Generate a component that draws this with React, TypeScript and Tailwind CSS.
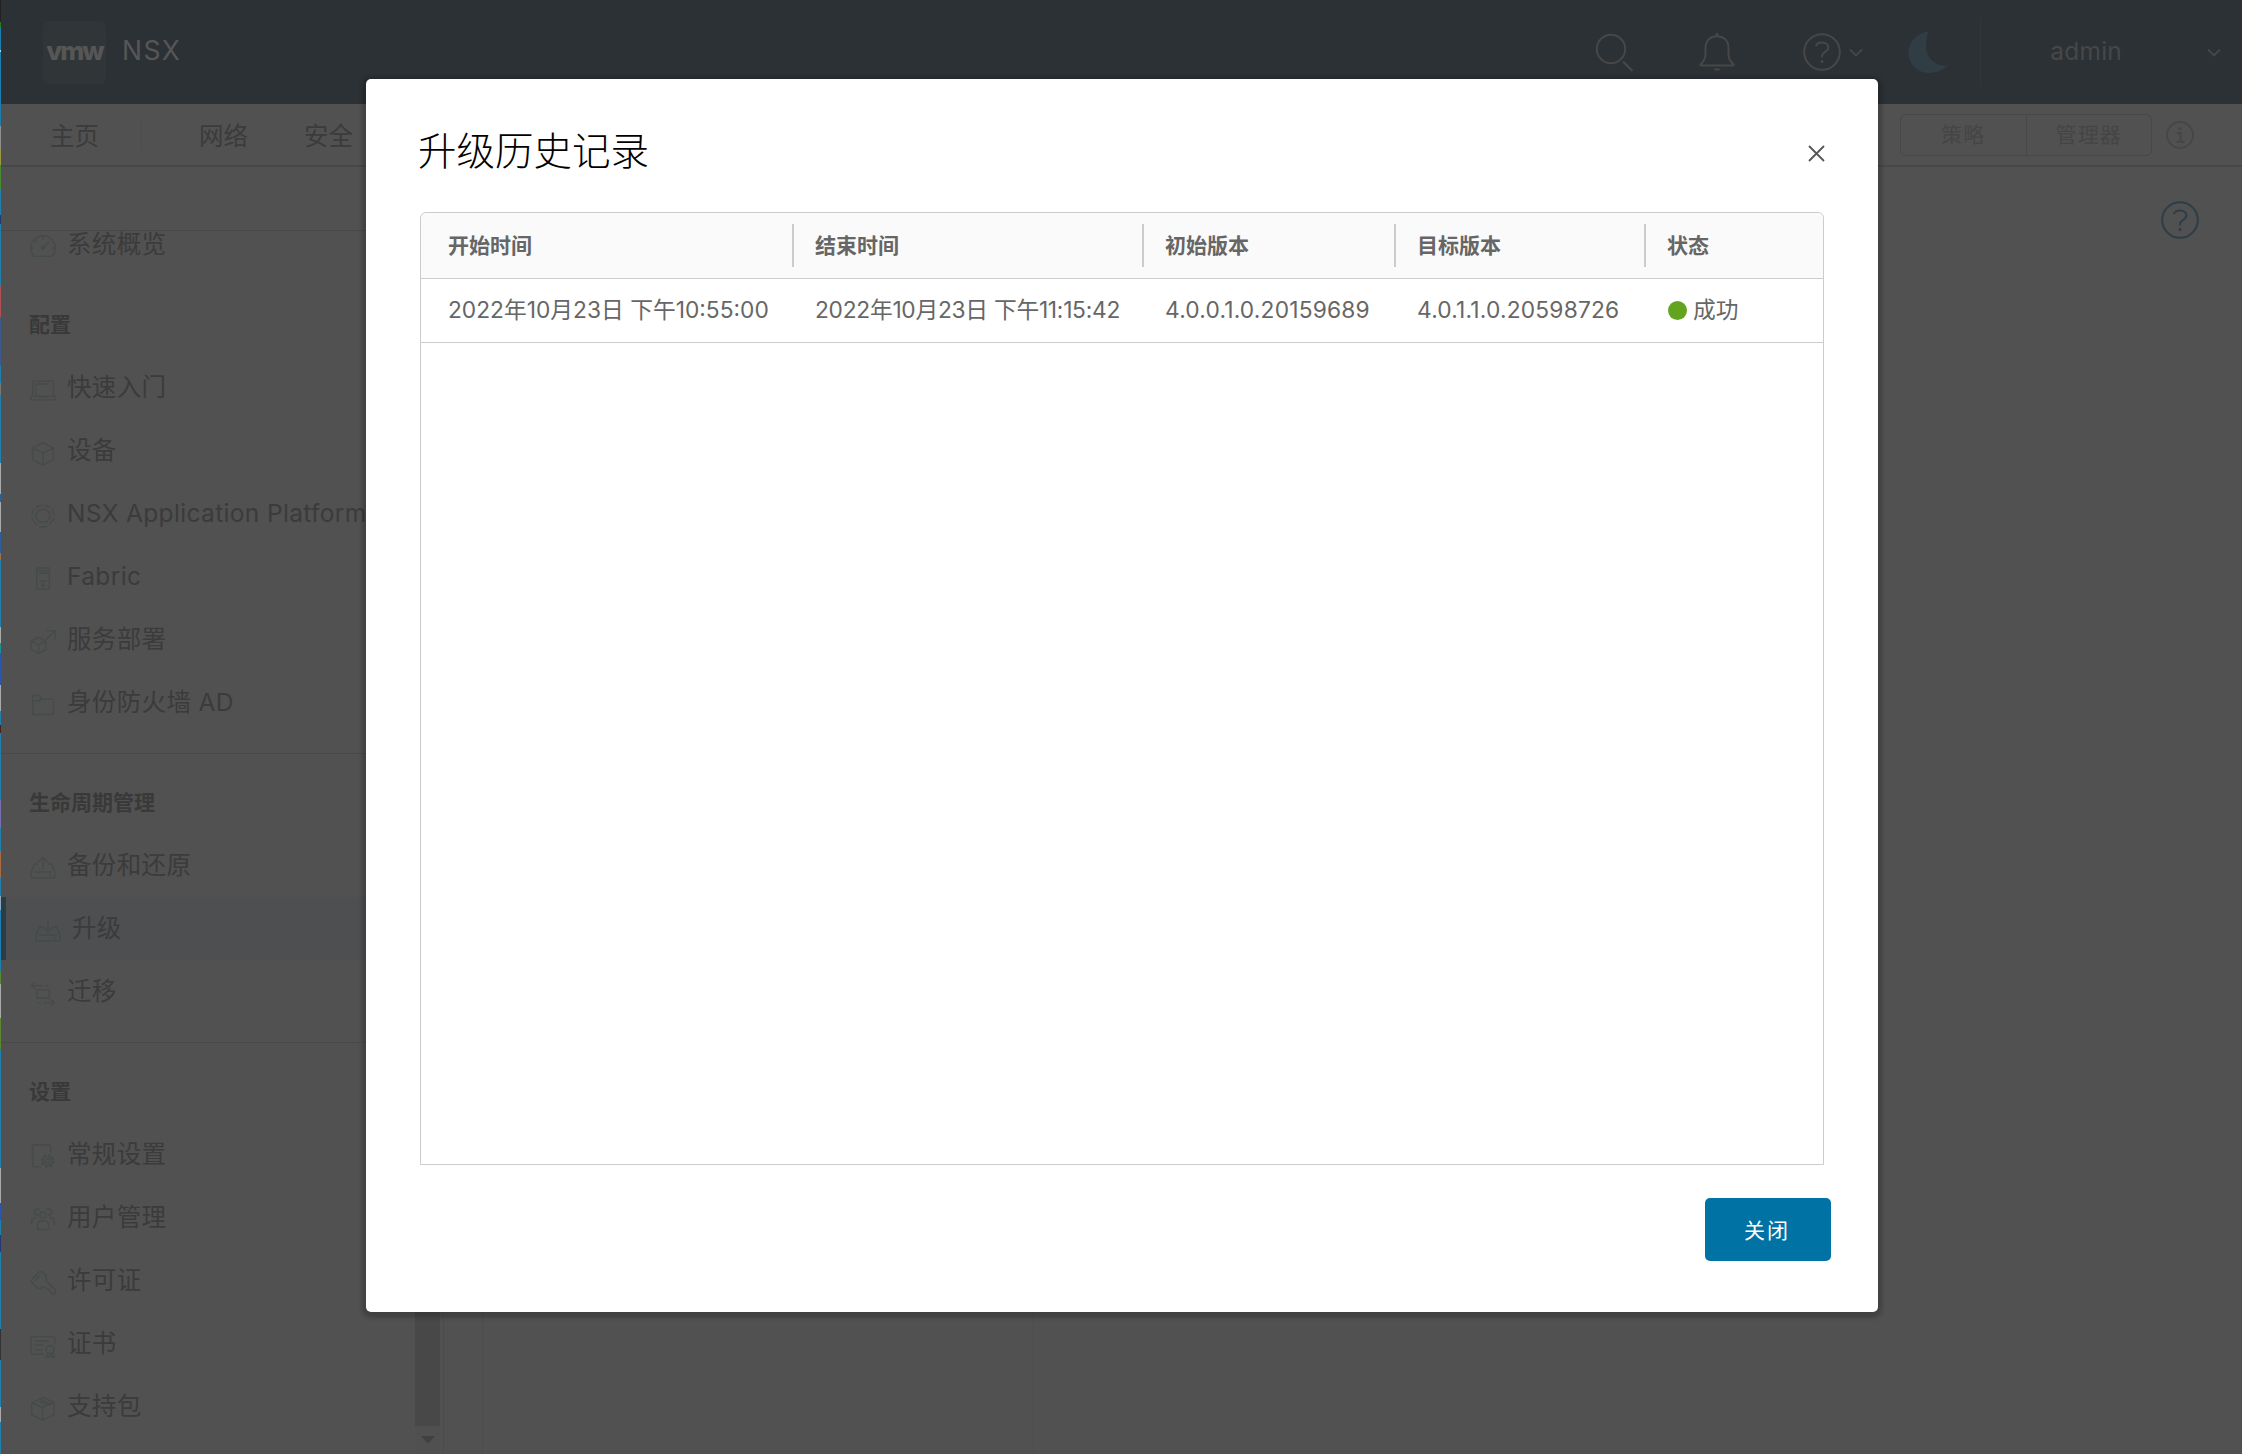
import type { ReactNode } from 'react';
import clsx from 'clsx';

interface NavItem {
  label: string;
  icon: ReactNode;
  active?: boolean;
}

interface HistoryRow {
  start: string;
  end: string;
  from: string;
  to: string;
  status: string;
}

const HISTORY: HistoryRow[] = [
  {
    start: '2022年10月23日 下午10:55:00',
    end: '2022年10月23日 下午11:15:42',
    from: '4.0.0.1.0.20159689',
    to: '4.0.1.1.0.20598726',
    status: '成功',
  },
];

// [height, colour] of the sliver of desktop left of the window
const DESKTOP: [number, string][] = [
  [22, '#222'], [5, '#2a7a1a'], [23, '#1a7fb0'], [2, '#ccc'], [74, '#1a7fb0'], [24, '#8f8f8f'],
  [15, '#9a9a40'], [25, '#4a8a30'], [25, '#1f80ad'], [9, '#223a70'], [61, '#1f80ad'], [32, '#b05050'],
  [49, '#3a5a90'], [17, '#1f80ad'], [12, '#777'], [68, '#1f80ad'], [31, '#aaa'], [8, '#2a5fa0'],
  [30, '#aaa'], [21, '#2a5fa0'], [7, '#a07040'], [67, '#1f80ad'], [16, '#aaa'], [10, '#1f9090'],
  [32, '#2a55b0'], [26, '#aaa'], [14, '#1f80ad'], [8, '#4a2020'], [67, '#1f80ad'], [28, '#7a6fb0'],
  [23, '#1f80ad'], [27, '#a86a45'], [18, '#1f80ad'], [14, '#8fa8c0'], [62, '#1f80ad'], [12, '#5a8a30'],
  [34, '#aaa'], [31, '#5a8a30'], [119, '#1f80ad'], [35, '#aaa'], [17, '#2a55b0'], [15, '#1f80ad'],
  [17, '#243a70'], [77, '#1f80ad'], [31, '#333'], [47, '#1f80ad'], [15, '#aaa'], [32, '#1f80ad'],
];

function Glyph({ children }: { children: ReactNode }) {
  return (
    <svg
      width="28"
      height="28"
      viewBox="0 0 28 28"
      fill="none"
      stroke="currentColor"
      strokeWidth="1.4"
      strokeLinejoin="round"
      className="mt-1.5 shrink-0 text-[#454a4b]"
    >
      {children}
    </svg>
  );
}

const OVERVIEW: NavItem = {
  label: '系统概览',
  icon: (
    <Glyph>
      <path d="M5 22.4A12.3 12.3 0 1 1 23 22.4Z" />
      <path d="M14 2v3.4M1.8 14h3M23.2 14h3M5.8 6l2.1 2.1M14 14l6.2-6.4" />
      <circle cx="14" cy="13.8" r="1.5" fill="currentColor" />
    </Glyph>
  ),
};

const SECTIONS: { title: string; items: NavItem[] }[] = [
  {
    title: '配置',
    items: [
      {
        label: '快速入门',
        icon: (
          <Glyph>
            <path d="M3.8 18V4.2h20.6V18M7 17.5V7h13.5M1.7 19.3h24.8v2.2a1.4 1.4 0 0 1-1.4 1.4H3.1a1.4 1.4 0 0 1-1.4-1.4ZM10 20.3h8" />
          </Glyph>
        ),
      },
      {
        label: '设备',
        icon: (
          <Glyph>
            <path d="M14 2.7 24.4 8v11.5L14 25.1 3.6 19.5V8ZM3.6 8 14 12.8 24.4 8M14 12.8v12" />
          </Glyph>
        ),
      },
      {
        label: 'NSX Application Platform',
        icon: (
          <Glyph>
            <path d="m14 5.8 5.6 2.4 1.6 5.6-3.6 5H10.4l-3.6-5 1.6-5.6Z" />
            <path d="m13 1.8-6 2.6M15 1.8l6 2.6M4.8 6.2 2.5 12.5M23.2 6.2l2.3 6.3M2.5 15l5.3 6.6M25.500 15l-5.3 6.6M10 23.800h8" />
          </Glyph>
        ),
      },
      {
        label: 'Fabric',
        icon: (
          <Glyph>
            <path d="M7.7 2h12.6v21.3H7.7ZM9.5 4.6h9M9.5 7h9M10 15h8" />
            <circle cx="14" cy="19.2" r="1.4" />
          </Glyph>
        ),
      },
      {
        label: '服务部署',
        icon: (
          <Glyph>
            <path d="m9.5 8.2 7.2 3.9v8.3l-7.2 4-7.2-4v-8.3ZM2.3 12.1l7.2 3.7 7.2-3.7M9.5 15.8v8.6M17.3 10.4l8.5-8.5M17.5 1.6h8.7v8.8" />
          </Glyph>
        ),
      },
      {
        label: '身份防火墙 AD',
        icon: (
          <Glyph>
            <path d="M3.7 8.5V4.5a1 1 0 0 1 1-1h5.3l3 3.4h10.5a1 1 0 0 1 1 1v13.6a1 1 0 0 1-1 1H4.700a1 1 0 0 1-1-1V8.600h7.5V6" />
          </Glyph>
        ),
      },
    ],
  },
  {
    title: '生命周期管理',
    items: [
      {
        label: '备份和还原',
        icon: (
          <Glyph>
            <path d="M9 9H5.5L2.3 16.5v6.3h23.4v-6.3L22.5 9H19M5 17h18M14 15V2.3M9 7l5-4.8L19 7M20 20h2.5" />
          </Glyph>
        ),
      },
      {
        label: '升级',
        active: true,
        icon: (
          <Glyph>
            <path d="M9 9H5.5L2.3 16.5v6.3h23.4v-6.3L22.5 9H19M5 17h18M14 1.5v12.2M9 9l5 4.8L19 9M20 20h2.5" />
          </Glyph>
        ),
      },
      {
        label: '迁移',
        icon: (
          <Glyph>
            <path d="M8 8.6h12.3v8.7H8ZM2.5 4.6h11M16 4.6h2.5M20 4.6h1M6 1.5 2.5 4.6 6 7.7M25.8 21.6h-11M12 21.6H9.5M8 21.6H7M22 18.5l3.5 3.1-3.5 3.1" />
          </Glyph>
        ),
      },
    ],
  },
  {
    title: '设置',
    items: [
      {
        label: '常规设置',
        icon: (
          <Glyph>
            <path d="M11.5 22.8H4.600a1 1 0 0 1-1-1V2a1 1 0 0 1 1-1h16a1 1 0 0 1 1 1v6" />
            <circle cx="18.800" cy="17" r="2.4" />
            <circle cx="18.800" cy="17" r="5" strokeWidth="1.2" />
            <circle cx="18.800" cy="17" r="6.2" strokeDasharray="2.2 2.67" strokeWidth="1.400" />
          </Glyph>
        ),
      },
      {
        label: '用户管理',
        icon: (
          <Glyph>
            <circle cx="14" cy="8" r="3.2" />
            <path d="M8.5 22.5v-5.2c0-2.3 2.3-3.6 5.5-3.6s5.5 1.3 5.5 3.6v5.2ZM9 7.500A2.900 2.900 0 1 1 10.500 3M19 7.500A2.900 2.900 0 1 0 17.500 3M2.800 18v-4.300c0-2.300 1.700-3.200 5.200-3.200M25.200 18v-4.300c0-2.300-1.700-3.200-5.200-3.200" />
          </Glyph>
        ),
      },
      {
        label: '许可证',
        icon: (
          <Glyph>
            <path d="M2.3 10.3 10.3 1.7h3.2l3.7 4v5.6l9 8.2v4h-3.2l-2.5-2.2v-2.2h-2.4l-2-2h-2.600l-2.300 1.500H8.700L2.300 12Z" />
            <path d="m5.8 11 5-5.4" />
          </Glyph>
        ),
      },
      {
        label: '证书',
        icon: (
          <Glyph>
            <path d="M15 21.3H3.300a1 1 0 0 1-1-1V4.600a1 1 0 0 1 1-1h21.400a1 1 0 0 1 1 1v7M5.500 8h14M5.500 12h9M5.500 16.800h8M18.500 20.500l-1.500 4 2.500-.5 1.800-2.500 1.800 2.500 2.500.5-1.500-4" />
            <circle cx="21.2" cy="16.5" r="4" />
          </Glyph>
        ),
      },
      {
        label: '支持包',
        icon: (
          <Glyph>
            <path d="M14 1.3 25.2 6.5v11.8L13.5 24.4 2.8 18.8V6.8ZM2.8 6.8l10.7 4.6 11.700-4.900M13.500 11.400v13M8 4.400l10.800 4.600M10.500 3.200 21 7.800" />
          </Glyph>
        ),
      },
    ],
  },
];

function NavRow({ item }: { item: NavItem }) {
  return (
    <div
      className={clsx(
        'flex h-[63px] items-center gap-2.5 whitespace-nowrap pl-7 text-[24.5px] tracking-[0.35px] text-[#3b3b3b]',
        item.active && 'border-l-[5px] border-[#2b3c47] bg-[#4d4f51]',
      )}
    >
      {item.icon}
      <span>{item.label}</span>
    </div>
  );
}

function HelpIcon({ className }: { className: string }) {
  return (
    <svg width="40" height="40" viewBox="0 0 40 40" fill="none" stroke="currentColor" strokeWidth="2" className={className}>
      <circle cx="20" cy="20" r="17.8" />
      <path d="M13.8 14.2c1-2.6 3.300-3.800 6-3.800 3.900 0 6.600 2.100 6.600 5.200 0 4.400-6.400 4.200-6.400 8.400v1.200" />
      <circle cx="20" cy="29.5" r="1.5" fill="currentColor" stroke="none" />
    </svg>
  );
}

function Caret({ className }: { className: string }) {
  return (
    <svg width="14" height="9" viewBox="0 0 14 9" fill="none" stroke="currentColor" strokeWidth="1.8" className={className}>
      <path d="m1 1.5 6 6 6-6" />
    </svg>
  );
}

function TopBar() {
  return (
    <header className="flex h-[104px] shrink-0 items-center bg-[#2c3135] text-[#474747]">
      <div className="ml-[42px] flex size-[63px] items-center justify-center rounded-md bg-[#303538] pb-0.5 text-[26px] font-extrabold leading-none tracking-[-2px] text-[#565656]">
        vmw
      </div>
      <span className="ml-4 pb-0.5 text-[26.5px] tracking-[1.5px] text-[#565656]">NSX</span>
      <svg width="40" height="42" viewBox="0 0 40 42" fill="none" stroke="currentColor" strokeWidth="2" className="ml-auto">
        <circle cx="17" cy="18" r="14.2" />
        <path d="m29 30.5 9.500 9.500" strokeWidth="2.400" />
      </svg>
      <svg width="36" height="40" viewBox="0 0 36 40" fill="none" stroke="currentColor" strokeWidth="2" strokeLinejoin="round" className="ml-[65px]">
        <path d="M1.5 33.5h33v-1.3c-3.8-3-5-5.7-5-10.2v-6C29.500 8.500 24.500 4.300 18 4.300S6.500 8.500 6.500 16v6c0 4.500-1.200 7.200-5 10.200Z" />
        <path d="M18 1v3" strokeWidth="2.6" />
        <path d="M15 36.5h6a3 2.2 0 0 1-6 0Z" fill="currentColor" stroke="none" />
      </svg>
      <HelpIcon className="ml-[67px]" />
      <Caret className="ml-[7px]" />
      <svg width="40" height="42" viewBox="0 0 40 42" className="ml-[45px] text-[#313d45]">
        <path d="M20.5.5C9 2 .5 11 .5 21.500.500 33 9.500 42 21.500 42c7.500 0 14-3 17.700-7.400C25 35 18 25.500 18 14.500 18 9 19 4 20.500.5Z" fill="currentColor" />
      </svg>
      <div className="ml-8 h-[70px] w-px bg-[#313639]" />
      <span className="ml-[69px] pb-px text-[24.5px] tracking-[0.2px]">admin</span>
      <Caret className="ml-[85px] mr-[21px]" />
    </header>
  );
}

function TabBar() {
  return (
    <nav className="flex h-[63px] shrink-0 items-center border-b-2 border-[#484848] text-[24.5px] text-[#3b3b3b]">
      <span className="ml-[49px] pt-[3px]">主页</span>
      <div className="ml-[42px] h-[30px] w-px bg-[#4d4d4d]" />
      <span className="ml-[57px] pt-[3px]">网络</span>
      <span className="ml-[56px] pt-[3px]">安全</span>
      <div className="ml-auto flex h-[42px] w-[252px] rounded-md border border-[#474747] text-[21px] tracking-[1.2px] text-[#454545]">
        <span className="flex flex-1 items-center justify-center border-r border-[#474747]">策略</span>
        <span className="flex flex-1 items-center justify-center">管理器</span>
      </div>
      <svg width="28" height="28" viewBox="0 0 28 28" fill="none" stroke="#464646" strokeWidth="1.8" className="ml-3.5 mr-12">
        <circle cx="14" cy="14" r="13" />
        <path d="M11 12.2h3.6v8M10.5 20.8h8" strokeWidth="2.2" />
        <circle cx="14" cy="7.5" r="1.6" fill="#464646" stroke="none" />
      </svg>
    </nav>
  );
}

function Sidebar() {
  return (
    <aside className="flex w-[443px] shrink-0 border-r border-[#4c4c4c]">
      <div className="flex w-[414px] flex-col pt-[63px]">
        <div className="h-[63px] shrink-0 border-t border-[#484848]">
          <div className="-mt-[18px]">
            <NavRow item={OVERVIEW} />
          </div>
        </div>
        {SECTIONS.map((section, i) => (
          <div
            key={section.title}
            className={clsx('flex flex-col', i > 0 && 'mt-[19px] border-t border-[#494949] pt-[17px]')}
          >
            <div className="flex h-[63px] items-center pl-7 text-[21px] font-bold text-[#393939]">
              {section.title}
            </div>
            {section.items.map((item) => (
              <NavRow key={item.label} item={item} />
            ))}
          </div>
        ))}
      </div>
      <div className="flex w-[25px] flex-col items-center bg-[#505050]">
        <div className="h-[1259px] w-full bg-[#484848]" />
        <svg width="14" height="8" viewBox="0 0 14 8" className="mt-2.5">
          <path d="M0 0h14L7 7.5Z" fill="#404040" />
        </svg>
      </div>
    </aside>
  );
}

const HEAD_CELL = 'flex h-[43px] items-center border-r-2 border-[#ccc]';

function HistoryTable() {
  return (
    <div className="ml-[54px] flex h-[953px] w-[1404px] flex-col rounded-t-md border border-[#ccc] text-[#666]">
      <div className="flex h-[66px] shrink-0 items-center rounded-t-md border-b border-[#ccc] bg-[#fafafa] text-[21px] font-bold">
        <div className={clsx(HEAD_CELL, 'w-[373px] pl-[27px]')}>开始时间</div>
        <div className={clsx(HEAD_CELL, 'w-[350px] pl-[21px]')}>结束时间</div>
        <div className={clsx(HEAD_CELL, 'w-[252px] pl-[21px]')}>初始版本</div>
        <div className={clsx(HEAD_CELL, 'w-[250px] pl-[21px]')}>目标版本</div>
        <div className="pl-[21px]">状态</div>
      </div>
      {HISTORY.map((row) => (
        <div
          key={row.start}
          className="flex h-16 shrink-0 items-center whitespace-nowrap border-b border-[#ccc] pb-px text-[22.75px]"
        >
          <div className="w-[373px] pl-[27px]">{row.start}</div>
          <div className="w-[350px] pl-[21px] tracking-[-0.27px]">{row.end}</div>
          <div className="w-[252px] pl-[21px] tracking-[0.2px]">{row.from}</div>
          <div className="w-[250px] pl-[21px] tracking-[0.2px]">{row.to}</div>
          <div className="flex items-center gap-1.5 pl-[22px]">
            <span className="size-[19px] rounded-full bg-[#62a420]" />
            {row.status}
          </div>
        </div>
      ))}
    </div>
  );
}

function HistoryModal() {
  return (
    <div className="absolute inset-0 flex items-start justify-center pl-0.5 pt-[79px]">
      <div
        role="dialog"
        className="flex h-[1233px] w-[1512px] flex-col rounded-[5px] bg-white shadow-[0_2px_4px_4px_rgba(0,0,0,0.2)]"
      >
        <div className="flex h-[133px] shrink-0 items-center justify-between pl-[52px] pr-[53px] pt-3">
          <h3 className="text-[38.5px] font-light leading-none text-black">升级历史记录</h3>
          <svg width="17" height="17" viewBox="0 0 17 17" stroke="#565656" strokeWidth="1.8" className="mt-1">
            <path d="m1 1 15 15M16 1 1 16" />
          </svg>
        </div>
        <HistoryTable />
        <div className="flex justify-end pr-[47px] pt-[33px]">
          <button className="h-[63px] w-[126px] rounded-[5px] bg-[#0072a3] pr-0.5 pt-0.5 text-[21px] tracking-[2px] text-white">
            关闭
          </button>
        </div>
      </div>
    </div>
  );
}

export default function App() {
  return (
    <div className="relative flex h-[1454px] w-[2242px] overflow-hidden bg-[#515151] font-[Inter,'Noto_Sans_CJK_SC',sans-serif]">
      <div className="w-px shrink-0">
        {DESKTOP.map(([height, color], i) => (
          <div key={i} style={{ height, background: color }} />
        ))}
      </div>
      <div className="flex flex-1 flex-col">
        <TopBar />
        <TabBar />
        <div className="flex flex-1">
          <Sidebar />
          <div className="ml-[38px] w-[552px] border-x border-[#4d4d4d]" />
          <div className="flex flex-1 justify-end pr-[42px] pt-[33px]">
            <HelpIcon className="text-[#2b3e48]" />
          </div>
        </div>
      </div>
      <HistoryModal />
    </div>
  );
}
